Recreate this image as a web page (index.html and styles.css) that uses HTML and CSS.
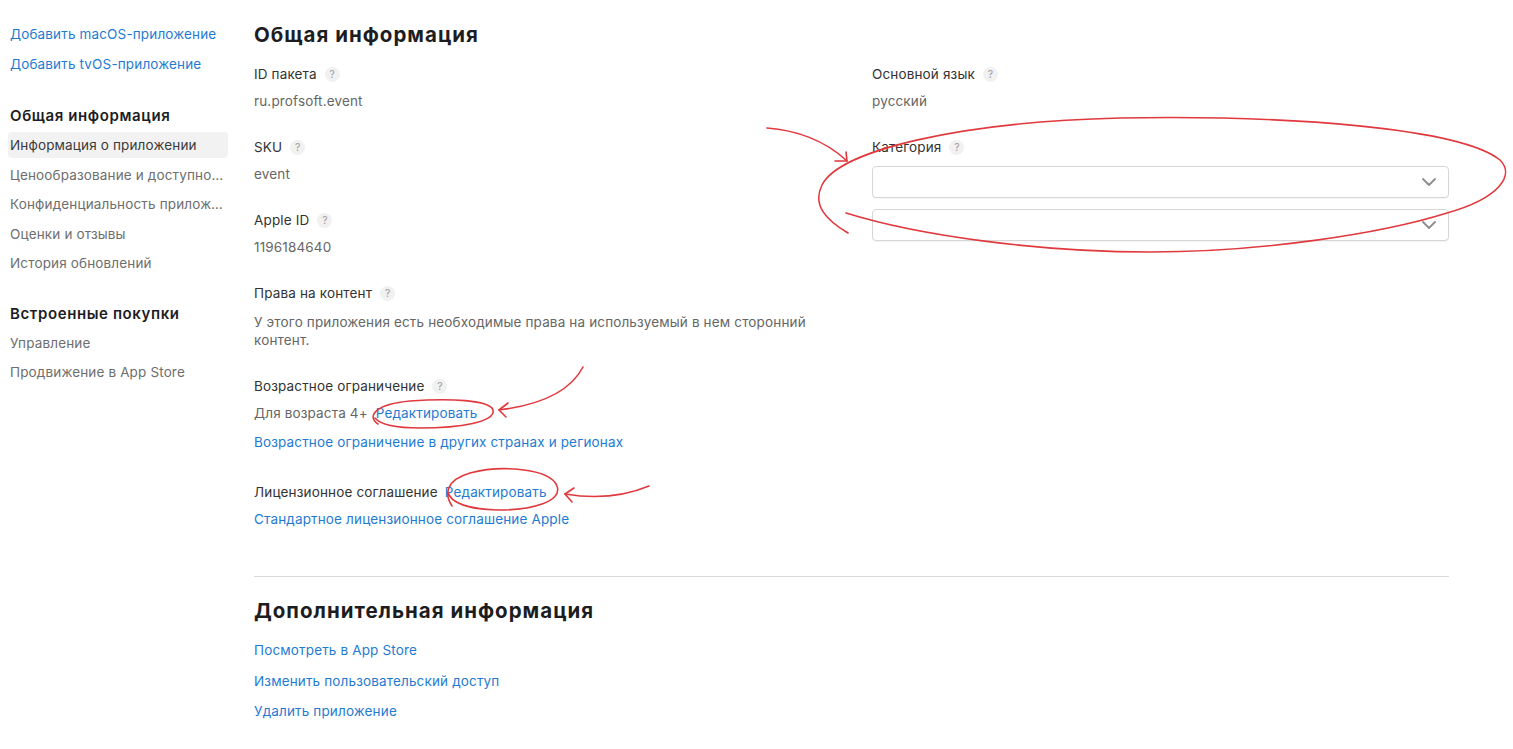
FILE: index.html
```html
<!DOCTYPE html>
<html lang="ru">
<head>
<meta charset="utf-8">
<title>Информация о приложении</title>
<link rel="stylesheet" href="styles.css">
</head>
<body>
<div class="page">
  <aside class="sidebar">
    <nav class="add-links">
      <a class="link" href="#">Добавить macOS-приложение</a>
      <a class="link" href="#">Добавить tvOS-приложение</a>
    </nav>
    <div class="nav-group">
      <div class="nav-title">Общая информация</div>
      <a class="nav-item active" href="#">Информация о приложении</a>
      <a class="nav-item" href="#">Ценообразование и доступность</a>
      <a class="nav-item" href="#">Конфиденциальность приложения</a>
      <a class="nav-item" href="#">Оценки и отзывы</a>
      <a class="nav-item" href="#">История обновлений</a>
    </div>
    <div class="nav-group">
      <div class="nav-title">Встроенные покупки</div>
      <a class="nav-item" href="#">Управление</a>
      <a class="nav-item" href="#">Продвижение в App Store</a>
    </div>
  </aside>

  <main class="content">
    <section class="general">
      <h1 class="section-title">Общая информация</h1>
      <div class="columns">
        <div class="col col-left">
          <div class="field">
            <div class="label">ID пакета <span class="help">?</span></div>
            <div class="value">ru.profsoft.event</div>
          </div>
          <div class="field">
            <div class="label">SKU <span class="help">?</span></div>
            <div class="value">event</div>
          </div>
          <div class="field">
            <div class="label">Apple ID <span class="help">?</span></div>
            <div class="value">1196184640</div>
          </div>
          <div class="field">
            <div class="label">Права на контент <span class="help">?</span></div>
            <div class="value text">У этого приложения есть необходимые права на используемый в нем сторонний контент.</div>
          </div>
          <div class="field">
            <div class="label">Возрастное ограничение <span class="help">?</span></div>
            <div class="value">Для возраста 4+ <a class="link edit" href="#">Редактировать</a></div>
            <a class="link sub-link" href="#">Возрастное ограничение в других странах и регионах</a>
          </div>
          <div class="field license">
            <div class="label">Лицензионное соглашение <a class="link" href="#">Редактировать</a></div>
            <a class="link sub-link tight" href="#">Стандартное лицензионное соглашение Apple</a>
          </div>
        </div>
        <div class="col col-right">
          <div class="field">
            <div class="label">Основной язык <span class="help">?</span></div>
            <div class="value">русский</div>
          </div>
          <div class="field">
            <div class="label">Категория <span class="help">?</span></div>
            <div class="select-stack">
              <div class="select"><svg class="chevron" viewBox="0 0 14 8" width="14" height="8"><path d="M1 1l6 6 6-6" fill="none" stroke="#8e8e8e" stroke-width="1.8" stroke-linecap="round" stroke-linejoin="round"/></svg></div>
              <div class="select"><svg class="chevron" viewBox="0 0 14 8" width="14" height="8"><path d="M1 1l6 6 6-6" fill="none" stroke="#8e8e8e" stroke-width="1.8" stroke-linecap="round" stroke-linejoin="round"/></svg></div>
            </div>
          </div>
        </div>
      </div>
    </section>

    <hr class="divider">

    <section class="extra">
      <h2 class="section-title">Дополнительная информация</h2>
      <div class="extra-links">
        <a class="link" href="#">Посмотреть в App Store</a>
        <a class="link" href="#">Изменить пользовательский доступ</a>
        <a class="link" href="#">Удалить приложение</a>
      </div>
    </section>
  </main>

  <svg class="annotations" viewBox="0 0 1513 749" width="1513" height="749" aria-hidden="true">
    <g fill="none" stroke="#e0393e" stroke-width="1.6" stroke-linecap="round" stroke-linejoin="round">
      <path d="M848 233 C 826 220, 812 205, 822 185 C 840 150, 960 122, 1120 118 C 1290 115, 1460 128, 1500 160 C 1515 175, 1500 198, 1447 213 C 1380 234, 1260 252, 1150 252 C 1040 252, 920 236, 846 213"/>
      <path d="M767 128 C 795 130, 825 140, 847 161"/>
      <path d="M835 161 L 847 161 L 846 152"/>
      <path d="M378 424 C 366 416, 376 404, 410 401 C 450 398, 490 400, 493 410 C 496 422, 460 428, 420 428 C 395 428, 380 424, 375 418"/>
      <path d="M583 367 C 570 392, 540 405, 499 410"/>
      <path d="M508 403 L 499 410 L 506 417"/>
      <path d="M452 506 C 444 494, 446 480, 470 473 C 500 465, 550 468, 557 486 C 563 502, 530 510, 500 510 C 470 510, 450 503, 448 492"/>
      <path d="M649 486 C 625 496, 595 499, 565 494"/>
      <path d="M574 488 L 565 494 L 572 502"/>
    </g>
  </svg>
</div>
</body>
</html>
```
FILE: styles.css
```css
* { box-sizing: border-box; }

html, body {
  margin: 0;
  padding: 0;
  background: #ffffff;
}

body {
  font-family: "Inter", "Liberation Sans", sans-serif;
  font-size: 13.5px;
  letter-spacing: 0.15px;
  line-height: 18px;
  color: #333333;
}

a { text-decoration: none; }

.page {
  position: relative;
  display: flex;
  width: 1513px;
  min-height: 749px;
}

.link { color: #1f7bd2; }

/* Sidebar */
.sidebar {
  width: 228px;
  padding: 25px 0 0 8px;
  flex: none;
}

.add-links {
  display: flex;
  flex-direction: column;
  gap: 12px;
  padding-left: 2px;
}

.nav-group {
  display: flex;
  flex-direction: column;
  margin-top: 33px;
}
.nav-group + .nav-group { margin-top: 24px; }

.nav-title {
  font-size: 15px;
  font-weight: 600;
  letter-spacing: 0.6px;
  color: #1d1d1f;
  padding-left: 2px;
  line-height: 20px;
  margin-bottom: 6px;
}

.nav-item {
  display: block;
  width: 220px;
  height: 26px;
  line-height: 26px;
  padding: 0 1px 0 2px;
  margin-bottom: 3.5px;
  color: #6e6e6e;
  border-radius: 4px;
  white-space: nowrap;
  overflow: hidden;
  text-overflow: ellipsis;
}
.nav-item.active {
  background: #f2f2f2;
  color: #3a3a3a;
}

/* Content */
.content {
  width: 1195px;
  margin-left: 26px;
  padding-top: 22px;
}

.section-title {
  margin: 0;
  font-size: 20.5px;
  line-height: 26px;
  font-weight: 700;
  color: #1d1d1f;
  letter-spacing: 1px;
}

.columns {
  display: flex;
  margin-top: 17px;
}
.col-left { width: 618px; }
.col-right { flex: 1; }

.field { margin-bottom: 28px; }

.label {
  display: flex;
  align-items: center;
  color: #333333;
}

.help {
  display: inline-flex;
  align-items: center;
  justify-content: center;
  width: 15px;
  height: 15px;
  margin-left: 8px;
  border-radius: 50%;
  background: #f1f1f1;
  color: #9c9c9c;
  font-size: 10.5px;
  letter-spacing: 0;
  line-height: 15px;
}

.value {
  margin-top: 9px;
  color: #666666;
}
.value.text {
  margin-top: 11px;
  max-width: 570px;
  line-height: 18px;
}

.value .edit { margin-left: 4px; }

.sub-link {
  display: block;
  margin-top: 11px;
}
.field.license { margin-top: 32px; }
.field.license .label .link { margin-left: 7px; }
.sub-link.tight { margin-top: 9px; }

.select-stack {
  display: flex;
  flex-direction: column;
  gap: 11px;
  margin-top: 10px;
}
.select {
  display: flex;
  align-items: center;
  justify-content: flex-end;
  height: 32px;
  padding-right: 12px;
  border: 1px solid #d6d6d6;
  border-radius: 4px;
  background: #fff;
  box-shadow: 0 1px 1px rgba(0,0,0,0.04);
}

.divider {
  margin: 20px 0 0;
  border: 0;
  border-top: 1px solid #d9d9d9;
}

.extra { padding-top: 21px; }
.extra-links {
  display: flex;
  flex-direction: column;
  gap: 12.5px;
  margin-top: 17px;
}

.annotations {
  position: absolute;
  left: 0;
  top: 0;
  pointer-events: none;
}
```
